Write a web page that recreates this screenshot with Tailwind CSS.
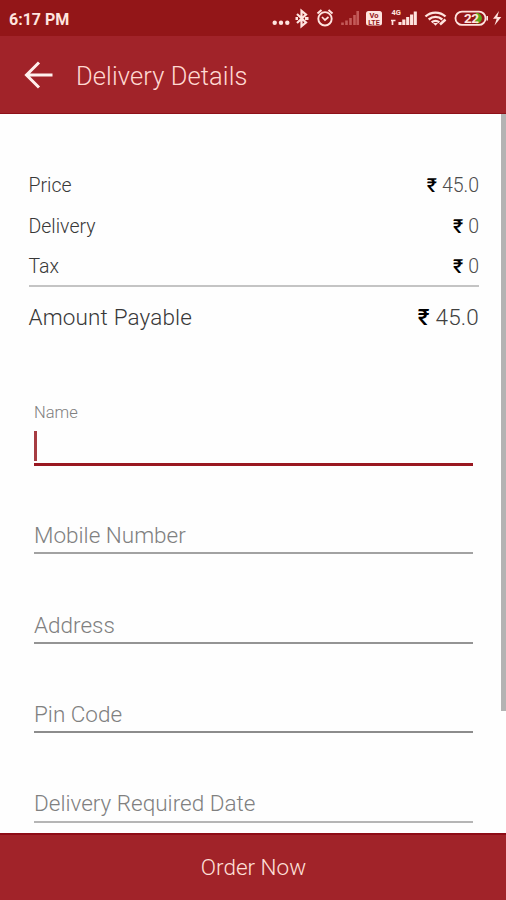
<!DOCTYPE html>
<html lang="en">
<head>
<meta charset="utf-8">
<title>Delivery Details</title>
<script src="https://cdn.jsdelivr.net/npm/@tailwindcss/browser@4"></script>
</head>
<body class="bg-[#fefefe] font-['Roboto',sans-serif] font-light">
<div class="relative flex h-[900px] w-[506px] flex-col overflow-hidden">
  <header class="shrink-0">
    <div class="flex h-9 items-center justify-between bg-[#931618] pl-[9px] text-[#ffe4df]">
      <span class="pt-[3px] text-[16px] font-bold leading-none">6:17 PM</span>
      <svg class="h-9 w-[240px]" viewBox="266 0 240 36" fill="none" stroke="currentColor">
        <g fill="currentColor" stroke="none"><circle cx="274.7" cy="22.8" r="2.2"/><circle cx="281" cy="22.8" r="2.2"/><circle cx="287.3" cy="22.8" r="2.2"/></g>
        <path d="M297 14l9 8.500-4.500 3.700V10.800l4.500 3.700-9 8.500" stroke-width="2.200"/>
        <path d="M295.500 18.500h2.500M305 18.500h3.500" stroke-width="2.800"/>
        <circle cx="325" cy="18.800" r="6.700" stroke-width="1.900"/>
        <path d="M317.500 13.500l4-3.500M332.500 13.500l-4-3.500" stroke-width="2"/>
        <path d="M322 17l3 3 3.500-3" stroke-width="1.700"/>
        <g stroke="#c45a59" stroke-width="2.600"><path d="M342.500 25v-2.500M346.500 25v-4.500M350.500 25v-7M354.500 25v-10M357.700 25v-14"/></g>
        <rect x="366" y="11" width="16" height="14.500" rx="2.500" fill="currentColor" stroke="none"/>
        <text x="374" y="18" text-anchor="middle" font-size="7.500" font-weight="700" fill="#931618" stroke="none">Vo</text>
        <text x="374" y="24.500" text-anchor="middle" font-size="7" font-weight="700" fill="#931618" stroke="none">LTE</text>
        <text x="391.500" y="15" font-size="7.500" font-weight="700" fill="currentColor" stroke="none">4G</text>
        <path d="M392.500 25v-5M391 20.500h4.500" stroke-width="1.700"/>
        <path d="M400 25v-3M403.800 25v-5.500M407.700 25v-8M411.600 25v-10.500M415.300 25v-13.500" stroke-width="3.100"/>
        <path d="M425.500 16.500c5.500-5.200 14.500-5.200 20 0M428.700 19.500c4-3.500 9.600-3.500 13.600 0M431.700 22.300c2.200-1.900 5.400-1.900 7.600 0" stroke-width="2.400"/>
        <path d="M433 23h5l-2.500 2.700z" fill="currentColor" stroke="none"/>
        <path d="M440 24.500l5.500-5" stroke-width="2.500"/>
        <rect x="455.500" y="11.600" width="30" height="13.300" rx="6.500" stroke-width="1.800"/>
        <path d="M478 13.500a5 5 0 0 1 0 9.500 h-2v-9.500z" fill="#58a91e" stroke="#58a91e" stroke-width="1"/>
        <path d="M487.200 16v4.500" stroke-width="1.600"/>
        <text x="464" y="23" font-size="13.500" font-weight="700" fill="currentColor" stroke="none" letter-spacing="-.5">22</text>
        <path d="M499 11l-6 7.800h3.700l-2.200 6.700 6.800-8.500h-4z" fill="currentColor" stroke="none"/>
      </svg>
    </div>
    <div class="flex h-[78px] items-center border-b border-[#8e1119] bg-[#a12329] pl-6 text-[#ffd9d2]">
      <svg class="h-8 w-[30px]" viewBox="0 0 30 32" fill="none" stroke="#fff0ed" stroke-width="3"><path d="M28.500 16H3M15 3.500L2.500 16 15 28.500"/></svg>
      <h1 class="ml-[22px] pt-0.5 text-[25.500px] leading-[30px] tracking-[0.1px]">Delivery Details</h1>
    </div>
  </header>

  <main class="flex-1 overflow-hidden">
    <section class="pt-[51px] pr-[27px] pl-[28.500px] text-[19.500px] text-[#383838]">
      <div class="flex h-[41px] items-center justify-between"><span>Price</span><span class="text-[#4c4c4c]"><b class="mr-[5px] font-medium text-black">₹</b>45.0</span></div>
      <div class="flex h-[41px] items-center justify-between"><span>Delivery</span><span class="text-[#4c4c4c]"><b class="mr-[5px] font-medium text-black">₹</b>0</span></div>
      <div class="flex h-[40px] items-center justify-between"><span>Tax</span><span class="text-[#4c4c4c]"><b class="mr-[5px] font-medium text-black">₹</b>0</span></div>
      <div class="-mt-0.5 flex h-[62px] items-center justify-between border-t-2 border-[#c4c4c4] pt-px text-[22.500px] tracking-[0.15px]"><span>Amount Payable</span><span class="text-[#404040]"><b class="mr-[6px] font-medium text-black">₹</b>45.0</span></div>
    </section>

    <form class="mt-[56px] ml-[34px] w-[439px] text-[22.500px] leading-7 text-[#808080]">
      <div class="flex h-[63px] flex-col border-b-[3px] border-[#991720]">
        <label class="text-[16.500px] leading-5">Name</label>
        <i class="mt-[8px] h-[30px] w-[3px] bg-[#a63c42]"></i>
      </div>
      <div class="flex h-[88px] items-end border-b-2 border-[#a2a2a2] pb-[3px]"><label>Mobile Number</label></div>
      <div class="flex h-[90px] items-end border-b-2 border-[#949494] pb-[3px]"><label>Address</label></div>
      <div class="flex h-[89px] items-end border-b-2 border-[#8c8c8c] pb-[3px]"><label>Pin Code</label></div>
      <div class="flex h-[90px] items-end border-b-2 border-[#b5b5b5] pb-1"><label>Delivery Required Date</label></div>
    </form>
  </main>

  <button class="h-[67px] shrink-0 border-t-2 border-[#8e0b16] bg-[#a12329] pl-px text-[22.500px] text-[#ffe0da]">Order Now</button>
  <div class="absolute top-[114px] right-0 h-[597px] w-[5px] bg-[#b3b3b3]"></div>
</div>
</body>
</html>
